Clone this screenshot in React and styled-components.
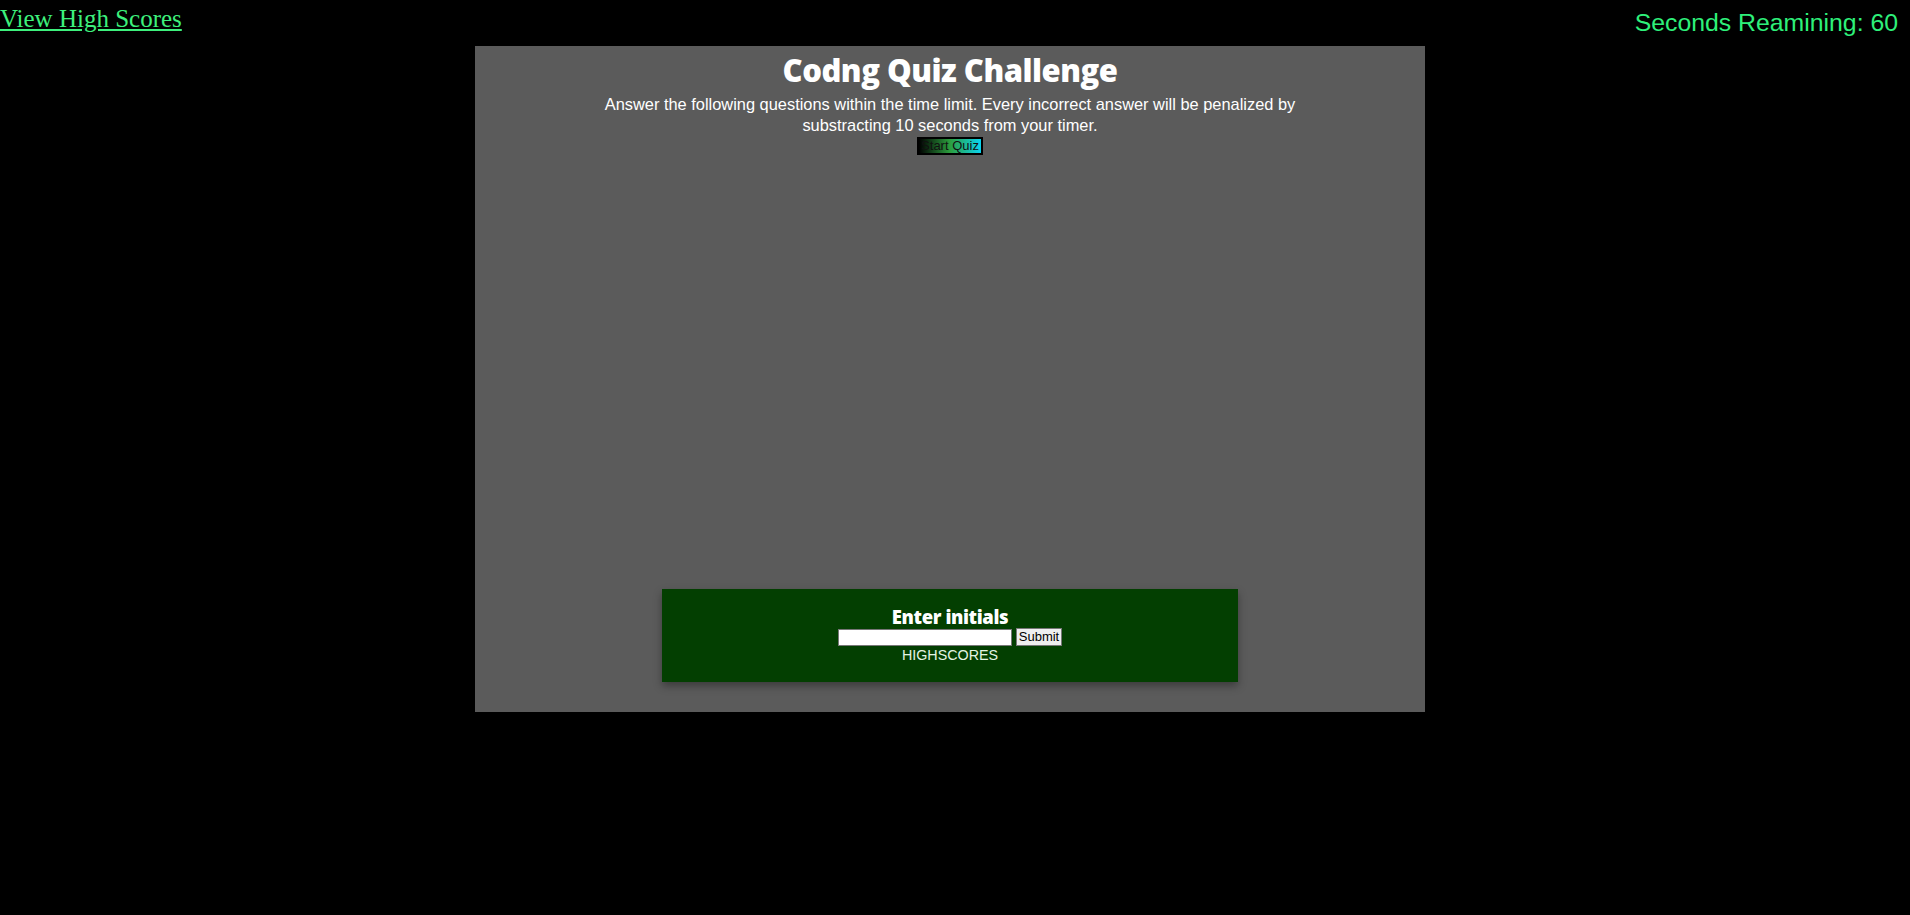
import React from "react";
import styled, { createGlobalStyle } from "styled-components";

const Global = createGlobalStyle`
  html, body { margin: 0; padding: 0; background: #000; }
  body { font-family: "Liberation Serif", serif; }
`;

const Page = styled.div`
  width: 1900px;
  min-height: 915px;
  background: #000;
`;

const Header = styled.header`
  display: flex;
  justify-content: space-between;
  align-items: flex-start;
  height: 46px;
`;

const HighLink = styled.a`
  font-family: "Liberation Serif", serif;
  font-size: 25px;
  line-height: 38px;
  color: #3df07c;
  text-decoration: underline;
`;

const Timer = styled.div`
  font-family: "Liberation Sans", sans-serif;
  font-size: 24.8px;
  line-height: 46px;
  color: #2ef07a;
  margin-right: 2px;
`;

const Main = styled.main`
  width: 950px;
  height: 666px;
  margin: 0 auto;
  background: #5b5b5b;
  display: flex;
  flex-direction: column;
  align-items: center;
  box-sizing: border-box;
  padding-bottom: 30px;
`;

const Title = styled.h1`
  margin: 4px 0 0;
  font-family: "Open Sans", "Liberation Sans", sans-serif;
  font-weight: 800;
  font-size: 31px;
  line-height: 40px;
  color: #fff;
  letter-spacing: -0.5px;
`;

const Intro = styled.p`
  margin: 4px 0 0;
  width: 720px;
  text-align: center;
  font-family: "Liberation Sans", sans-serif;
  font-size: 16.4px;
  line-height: 21px;
  color: #fff;
`;

const StartButton = styled.button`
  margin-top: 1px;
  padding: 0 2px;
  height: 18px;
  border: 2px solid #000;
  background: linear-gradient(90deg, #000 0%, #2c9e3e 50%, #0ad4f0 100%);
  font-family: "Liberation Sans", sans-serif;
  font-size: 13px;
  line-height: 14px;
  color: #111;
  cursor: pointer;
`;

const InitialsBox = styled.section`
  margin-top: auto;
  width: 576px;
  height: 93px;
  box-sizing: border-box;
  padding-top: 17px;
  background: #033f01;
  box-shadow: 0 4px 8px rgba(0, 0, 0, 0.35);
  display: flex;
  flex-direction: column;
  align-items: center;
`;

const BoxTitle = styled.h3`
  margin: 0;
  font-family: "Open Sans", "Liberation Sans", sans-serif;
  font-weight: 800;
  font-size: 18.5px;
  line-height: 22px;
  color: #fff;
  letter-spacing: -0.4px;
`;

const FormRow = styled.form`
  display: flex;
  align-items: center;
  gap: 4px;
`;

const TextInput = styled.input`
  width: 168px;
  height: 13px;
  padding: 1px 2px;
  border: 1px solid #777;
  background: #fff;
  font-size: 12px;
`;

const SubmitButton = styled.button`
  height: 18px;
  padding: 0 2px;
  border: 1px solid #777;
  background: #efefef;
  font-family: "Liberation Sans", sans-serif;
  font-size: 13px;
  line-height: 14px;
  color: #000;
`;

const Scores = styled.div`
  font-family: "Liberation Sans", sans-serif;
  font-size: 14.3px;
  line-height: 18px;
  color: #e4f4e4;
`;

export default function App() {
  return (
    <>
      <Global />
      <Page>
        <Header>
          <HighLink href="#">View High Scores</HighLink>
          <Timer>Seconds Reamining: 60</Timer>
        </Header>
        <Main>
          <Title>Codng Quiz Challenge</Title>
          <Intro>
            Answer the following questions within the time limit. Every incorrect answer will be penalized by substracting 10 seconds from your timer.
          </Intro>
          <StartButton>Start Quiz</StartButton>
          <InitialsBox>
            <BoxTitle>Enter initials</BoxTitle>
            <FormRow onSubmit={(e) => e.preventDefault()}>
              <TextInput type="text" />
              <SubmitButton type="submit">Submit</SubmitButton>
            </FormRow>
            <Scores>HIGHSCORES</Scores>
          </InitialsBox>
        </Main>
      </Page>
    </>
  );
}
